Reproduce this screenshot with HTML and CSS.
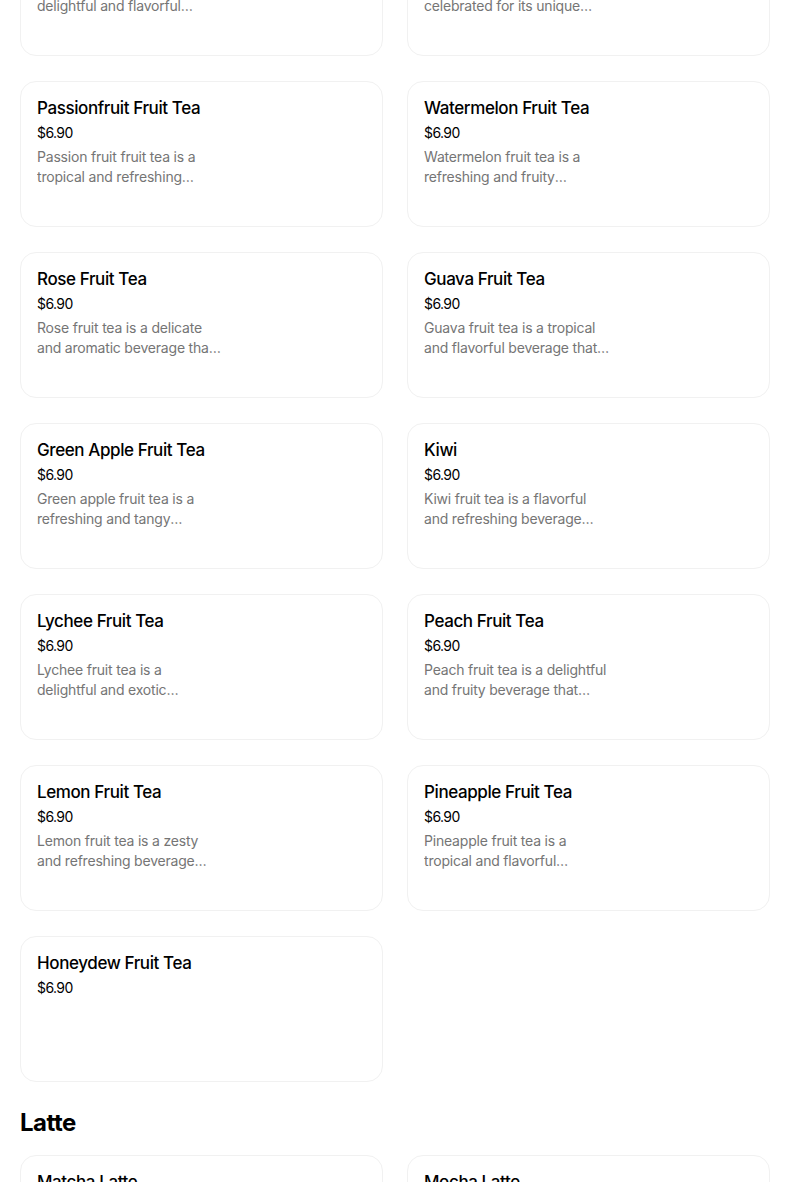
FILE: index.html
```html
<!DOCTYPE html>
<html lang="en">
<head>
<meta charset="utf-8">
<title>Menu</title>
<link rel="stylesheet" href="styles.css">
</head>
<body>
<main class="menu">
  <section class="section section--scrolled">
    <div class="grid">
      <article class="card">
        <h3 class="card-title">Strawberry Fruit Tea</h3>
        <p class="card-price">$6.90</p>
        <p class="card-desc">Strawberry fruit tea is a delightful and flavorful beverage that combines tea with berries.</p>
      </article>
      <article class="card">
        <h3 class="card-title">Grapefruit Fruit Tea</h3>
        <p class="card-price">$6.90</p>
        <p class="card-desc">Grapefruit fruit tea is celebrated for its unique tangy and bittersweet taste.</p>
      </article>
      <article class="card">
        <h3 class="card-title">Passionfruit Fruit Tea</h3>
        <p class="card-price">$6.90</p>
        <p class="card-desc">Passion fruit fruit tea is a tropical and refreshing beverage with a tangy taste.</p>
      </article>
      <article class="card">
        <h3 class="card-title">Watermelon Fruit Tea</h3>
        <p class="card-price">$6.90</p>
        <p class="card-desc">Watermelon fruit tea is a refreshing and fruity beverage perfect for summer.</p>
      </article>
      <article class="card">
        <h3 class="card-title">Rose Fruit Tea</h3>
        <p class="card-price">$6.90</p>
        <p class="card-desc">Rose fruit tea is a delicate and aromatic beverage that blends floral notes.</p>
      </article>
      <article class="card">
        <h3 class="card-title">Guava Fruit Tea</h3>
        <p class="card-price">$6.90</p>
        <p class="card-desc">Guava fruit tea is a tropical and flavorful beverage that is sweet and fragrant.</p>
      </article>
      <article class="card">
        <h3 class="card-title">Green Apple Fruit Tea</h3>
        <p class="card-price">$6.90</p>
        <p class="card-desc">Green apple fruit tea is a refreshing and tangy beverage with crisp apple flavor.</p>
      </article>
      <article class="card">
        <h3 class="card-title">Kiwi</h3>
        <p class="card-price">$6.90</p>
        <p class="card-desc">Kiwi fruit tea is a flavorful and refreshing beverage with a bright taste.</p>
      </article>
      <article class="card">
        <h3 class="card-title">Lychee Fruit Tea</h3>
        <p class="card-price">$6.90</p>
        <p class="card-desc">Lychee fruit tea is a delightful and exotic beverage with floral sweetness.</p>
      </article>
      <article class="card">
        <h3 class="card-title">Peach Fruit Tea</h3>
        <p class="card-price">$6.90</p>
        <p class="card-desc">Peach fruit tea is a delightful and fruity beverage that captures summer sweetness.</p>
      </article>
      <article class="card">
        <h3 class="card-title">Lemon Fruit Tea</h3>
        <p class="card-price">$6.90</p>
        <p class="card-desc">Lemon fruit tea is a zesty and refreshing beverage with bright citrus notes.</p>
      </article>
      <article class="card">
        <h3 class="card-title">Pineapple Fruit Tea</h3>
        <p class="card-price">$6.90</p>
        <p class="card-desc">Pineapple fruit tea is a tropical and flavorful beverage with sweet pineapple.</p>
      </article>
      <article class="card">
        <h3 class="card-title">Honeydew Fruit Tea</h3>
        <p class="card-price">$6.90</p>
      </article>
    </div>
  </section>
  <section class="section">
    <h2 class="section-title">Latte</h2>
    <div class="grid">
      <article class="card">
        <h3 class="card-title">Matcha Latte</h3>
        <p class="card-price">$6.90</p>
        <p class="card-desc">Matcha latte is a creamy and earthy beverage made with green tea powder.</p>
      </article>
      <article class="card">
        <h3 class="card-title">Mocha Latte</h3>
        <p class="card-price">$6.90</p>
        <p class="card-desc">Mocha latte is a rich blend of espresso, chocolate and steamed milk.</p>
      </article>
    </div>
  </section>
</main>
</body>
</html>
```

FILE: styles.css
```css
* { box-sizing: border-box; }

html, body {
  margin: 0;
  padding: 0;
  background: #ffffff;
}

body {
  font-family: Inter, "Noto Sans", "Liberation Sans", sans-serif;
  color: #000000;
  overflow: hidden;
}

.menu {
  width: 750px;
  margin-left: 20px;
}

.section--scrolled {
  margin-top: -90px;
}

.grid {
  display: grid;
  grid-template-columns: 1fr 1fr;
  column-gap: 24px;
  row-gap: 25px;
}

.card {
  height: 146px;
  border: 1px solid #f1f1f1;
  border-radius: 16px;
  padding: 14px 16px;
  background: #ffffff;
}

.card-title {
  margin: 0;
  font-size: 17px;
  line-height: 24px;
  font-weight: 500;
  letter-spacing: -0.4px;
}

.card-price {
  margin: 3px 0 0;
  font-size: 14px;
  line-height: 20px;
  font-weight: 400;
  letter-spacing: -0.6px;
}

.card-desc {
  margin: 4px 0 0;
  max-width: 186px;
  font-size: 14px;
  line-height: 20px;
  letter-spacing: -0.2px;
  color: #757575;
  display: -webkit-box;
  -webkit-box-orient: vertical;
  -webkit-line-clamp: 2;
  overflow: hidden;
}

.section-title {
  margin: 25px 0 16px;
  font-size: 24px;
  line-height: 32px;
  font-weight: 700;
  letter-spacing: -0.5px;
}
```
